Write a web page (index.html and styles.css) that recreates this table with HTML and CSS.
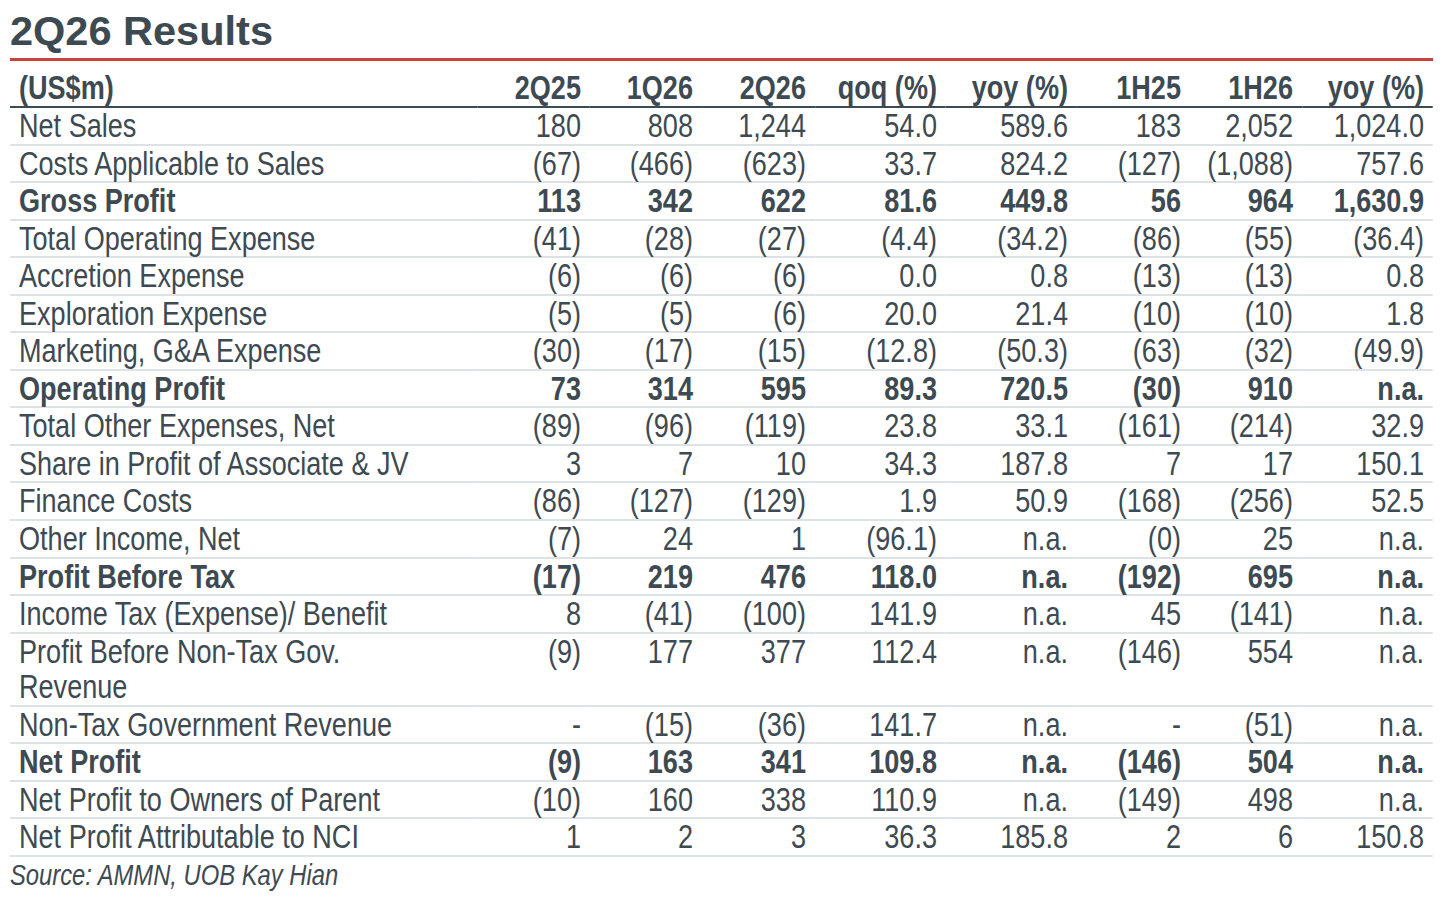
FILE: index.html
```html
<!DOCTYPE html>
<html lang="en">
<head>
    <meta charset="UTF-8">
    <title>2Q26 Results</title>
    <link rel="stylesheet" href="styles.css">
</head>
<body>
    <h1 class="title">2Q26 Results</h1>

    <!-- no narrow face is installed, so the sheet is drawn wide and squeezed -->
    <div class="sheet">
        <table class="results">
            <colgroup>
                <col class="col-label">
                <col class="col-q">
                <col class="col-q2">
                <col class="col-q">
                <col class="col-pct">
                <col class="col-pct">
                <col class="col-q">
                <col class="col-q2">
                <col class="col-pct">
            </colgroup>
            <thead>
                <tr>
                    <th>(US$m)</th>
                    <th>2Q25</th>
                    <th>1Q26</th>
                    <th>2Q26</th>
                    <th>qoq (%)</th>
                    <th>yoy (%)</th>
                    <th>1H25</th>
                    <th>1H26</th>
                    <th>yoy (%)</th>
                </tr>
            </thead>
            <tbody>
                <tr>
                    <td>Net Sales</td>
                    <td>180</td><td>808</td><td>1,244</td><td>54.0</td><td>589.6</td><td>183</td><td>2,052</td><td>1,024.0</td>
                </tr>
                <tr>
                    <td>Costs Applicable to Sales</td>
                    <td>(67)</td><td>(466)</td><td>(623)</td><td>33.7</td><td>824.2</td><td>(127)</td><td>(1,088)</td><td>757.6</td>
                </tr>
                <tr class="total">
                    <td>Gross Profit</td>
                    <td>113</td><td>342</td><td>622</td><td>81.6</td><td>449.8</td><td>56</td><td>964</td><td>1,630.9</td>
                </tr>
                <tr>
                    <td>Total Operating Expense</td>
                    <td>(41)</td><td>(28)</td><td>(27)</td><td>(4.4)</td><td>(34.2)</td><td>(86)</td><td>(55)</td><td>(36.4)</td>
                </tr>
                <tr>
                    <td>Accretion Expense</td>
                    <td>(6)</td><td>(6)</td><td>(6)</td><td>0.0</td><td>0.8</td><td>(13)</td><td>(13)</td><td>0.8</td>
                </tr>
                <tr>
                    <td>Exploration Expense</td>
                    <td>(5)</td><td>(5)</td><td>(6)</td><td>20.0</td><td>21.4</td><td>(10)</td><td>(10)</td><td>1.8</td>
                </tr>
                <tr>
                    <td>Marketing, G&amp;A Expense</td>
                    <td>(30)</td><td>(17)</td><td>(15)</td><td>(12.8)</td><td>(50.3)</td><td>(63)</td><td>(32)</td><td>(49.9)</td>
                </tr>
                <tr class="total">
                    <td>Operating Profit</td>
                    <td>73</td><td>314</td><td>595</td><td>89.3</td><td>720.5</td><td>(30)</td><td>910</td><td>n.a.</td>
                </tr>
                <tr>
                    <td>Total Other Expenses, Net</td>
                    <td>(89)</td><td>(96)</td><td>(119)</td><td>23.8</td><td>33.1</td><td>(161)</td><td>(214)</td><td>32.9</td>
                </tr>
                <tr>
                    <td>Share in Profit of Associate &amp; JV</td>
                    <td>3</td><td>7</td><td>10</td><td>34.3</td><td>187.8</td><td>7</td><td>17</td><td>150.1</td>
                </tr>
                <tr>
                    <td>Finance Costs</td>
                    <td>(86)</td><td>(127)</td><td>(129)</td><td>1.9</td><td>50.9</td><td>(168)</td><td>(256)</td><td>52.5</td>
                </tr>
                <tr>
                    <td>Other Income, Net</td>
                    <td>(7)</td><td>24</td><td>1</td><td>(96.1)</td><td>n.a.</td><td>(0)</td><td>25</td><td>n.a.</td>
                </tr>
                <tr class="total">
                    <td>Profit Before Tax</td>
                    <td>(17)</td><td>219</td><td>476</td><td>118.0</td><td>n.a.</td><td>(192)</td><td>695</td><td>n.a.</td>
                </tr>
                <tr>
                    <td>Income Tax (Expense)/ Benefit</td>
                    <td>8</td><td>(41)</td><td>(100)</td><td>141.9</td><td>n.a.</td><td>45</td><td>(141)</td><td>n.a.</td>
                </tr>
                <tr>
                    <td>Profit Before Non-Tax Gov.<br>Revenue</td>
                    <td>(9)</td><td>177</td><td>377</td><td>112.4</td><td>n.a.</td><td>(146)</td><td>554</td><td>n.a.</td>
                </tr>
                <tr>
                    <td>Non-Tax Government Revenue</td>
                    <td>-</td><td>(15)</td><td>(36)</td><td>141.7</td><td>n.a.</td><td>-</td><td>(51)</td><td>n.a.</td>
                </tr>
                <tr class="total">
                    <td>Net Profit</td>
                    <td>(9)</td><td>163</td><td>341</td><td>109.8</td><td>n.a.</td><td>(146)</td><td>504</td><td>n.a.</td>
                </tr>
                <tr>
                    <td>Net Profit to Owners of Parent</td>
                    <td>(10)</td><td>160</td><td>338</td><td>110.9</td><td>n.a.</td><td>(149)</td><td>498</td><td>n.a.</td>
                </tr>
                <tr>
                    <td>Net Profit Attributable to NCI</td>
                    <td>1</td><td>2</td><td>3</td><td>36.3</td><td>185.8</td><td>2</td><td>6</td><td>150.8</td>
                </tr>
            </tbody>
        </table>
    </div>

    <p class="source">Source: AMMN, UOB Kay Hian</p>
</body>
</html>
```

FILE: styles.css
```css
/* Report table palette */
:root {
    --ink: #3e4a52;
    --rule-red: #c8423b;
    --rule-light: #dde2e5;
    --narrow: 0.82;
}

* {
    margin: 0;
    padding: 0;
    box-sizing: border-box;
}

body {
    background: #fff;
    color: var(--ink);
    padding: 0 10px;
    font-family: 'Liberation Sans', Arial, sans-serif;
    overflow: hidden;
}

.title {
    font-size: 41.5px;
    font-weight: bold;
    line-height: 48px;
    padding-top: 7px;
    padding-bottom: 3px;
    border-bottom: 3px solid var(--rule-red);
}

.sheet {
    width: 1423px;
    overflow: hidden;
}

.results {
    width: calc(1423px / var(--narrow));
    border-collapse: collapse;
    table-layout: fixed;
    font-size: 33px;
    transform: scaleX(var(--narrow));
    transform-origin: left top;
}

.col-label { width: calc(467px / var(--narrow)); }
.col-q { width: calc(113px / var(--narrow)); }
.col-q2 { width: calc(112px / var(--narrow)); }
.col-pct { width: calc(131px / var(--narrow)); }

.results th,
.results td {
    padding: 0 11px;
    text-align: right;
    vertical-align: top;
    white-space: nowrap;
}

.results th:first-child,
.results td:first-child {
    text-align: left;
}

.results th {
    font-weight: bold;
    line-height: 36px;
    padding-top: 9px;
    border-bottom: 2px solid var(--ink);
}

.results td {
    font-weight: normal;
    line-height: 35.55px;
    border-bottom: 2px solid var(--rule-light);
}

.results tr.total td {
    font-weight: bold;
}

.source {
    font-size: 29px;
    font-style: italic;
    line-height: 36px;
    transform: scaleX(var(--narrow));
    transform-origin: left top;
}
```
